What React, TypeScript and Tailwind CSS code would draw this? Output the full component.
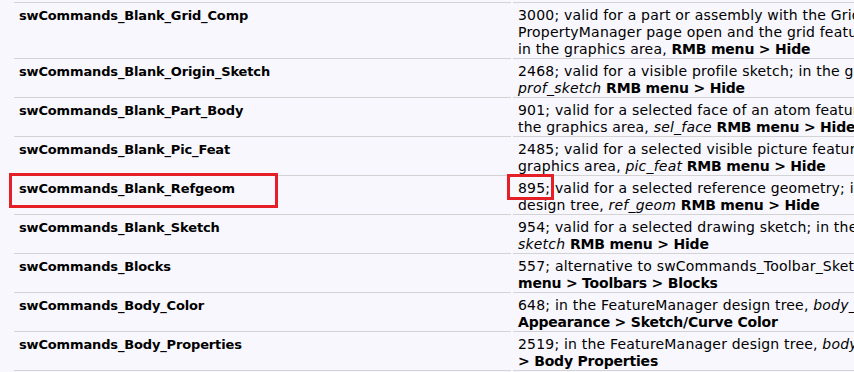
import type { ReactNode } from "react";

interface CommandRow {
  name: string;
  desc: ReactNode;
  marked?: boolean;
}

// bold runs in the description column are set a touch tighter than the plain text
const B = ({ children }: { children: ReactNode }) => (
  <b className="tracking-[-0.2px]">{children}</b>
);

const rows: CommandRow[] = [
  {
    name: "swCommands_Blank_Grid_Comp",
    desc: (
      <>
        3000; valid for a part or assembly with the Grid
        <br />
        PropertyManager page open and the grid feature selected
        <br />
        in the graphics area, <B>RMB menu &gt; Hide</B>
      </>
    ),
  },
  {
    name: "swCommands_Blank_Origin_Sketch",
    desc: (
      <>
        2468; valid for a visible profile sketch; in the graphics area,
        <br />
        <i>prof_sketch</i> <B>RMB menu &gt; Hide</B>
      </>
    ),
  },
  {
    name: "swCommands_Blank_Part_Body",
    desc: (
      <>
        901; valid for a selected face of an atom feature; in
        <br />
        the graphics area, <i>sel_face</i> <B>RMB menu &gt; Hide</B>
      </>
    ),
  },
  {
    name: "swCommands_Blank_Pic_Feat",
    desc: (
      <>
        2485; valid for a selected visible picture feature; in the
        <br />
        graphics area, <i>pic_feat</i> <B>RMB menu &gt; Hide</B>
      </>
    ),
  },
  {
    name: "swCommands_Blank_Refgeom",
    marked: true,
    desc: (
      <>
        895; valid for a selected reference geometry; in the FeatureManager
        <br />
        design tree, <i>ref_geom</i> <B>RMB menu &gt; Hide</B>
      </>
    ),
  },
  {
    name: "swCommands_Blank_Sketch",
    desc: (
      <>
        954; valid for a selected drawing sketch; in the graphics area,
        <br />
        <i>sketch</i> <B>RMB menu &gt; Hide</B>
      </>
    ),
  },
  {
    name: "swCommands_Blocks",
    desc: (
      <>
        557; alternative to swCommands_Toolbar_Sketch; in the graphics area, <B>RMB</B>
        <br />
        <B>menu &gt; Toolbars &gt; Blocks</B>
      </>
    ),
  },
  {
    name: "swCommands_Body_Color",
    desc: (
      <>
        648; in the FeatureManager design tree, <i>body_name</i> <B>RMB menu &gt;</B>
        <br />
        <B>Appearance &gt; Sketch/Curve Color</B>
      </>
    ),
  },
  {
    name: "swCommands_Body_Properties",
    desc: (
      <>
        2519; in the FeatureManager design tree, <i>body_name</i> <B>RMB menu</B>
        <br />
        <B>&gt; Body Properties</B>
      </>
    ),
  },
];

const cell = "align-top border-b border-[#d3d3d3] pt-[2px] pb-0 pl-[5px] pr-0";

export default function App() {
  return (
    <div className="h-[372px] w-[854px] overflow-hidden bg-[#f7f7fd] font-['DejaVu_Sans',Verdana,sans-serif] text-[13px] leading-[17px] text-black">
      <table className="ml-[12px] w-[1103px] table-fixed border-separate border-spacing-[2px]">
        <colgroup>
          <col className="w-[497px]" />
          <col className="w-[600px]" />
        </colgroup>
        <tbody>
          {/* tail of the row above, only its rule shows */}
          <tr>
            <td className="h-0 p-0 border-b border-[#d3d3d3]" />
            <td className="h-0 p-0 border-b border-[#d3d3d3]" />
          </tr>
          {rows.map((row) => (
            <tr key={row.name}>
              <td className={`${cell} relative font-bold tracking-[-0.15px]`}>
                {row.name}
                {row.marked && (
                  <span className="pointer-events-none absolute -left-[5px] -top-[5px] h-[35px] w-[269px] border-[3px] border-[#e41f26]" />
                )}
              </td>
              <td className={`${cell} relative whitespace-nowrap text-[14px] tracking-[0.2px]`}>
                {row.desc}
                {row.marked && (
                  <span className="pointer-events-none absolute -left-[6px] -top-[4px] h-[26px] w-[47px] border-[3px] border-[#e41f26]" />
                )}
              </td>
            </tr>
          ))}
        </tbody>
      </table>
    </div>
  );
}
